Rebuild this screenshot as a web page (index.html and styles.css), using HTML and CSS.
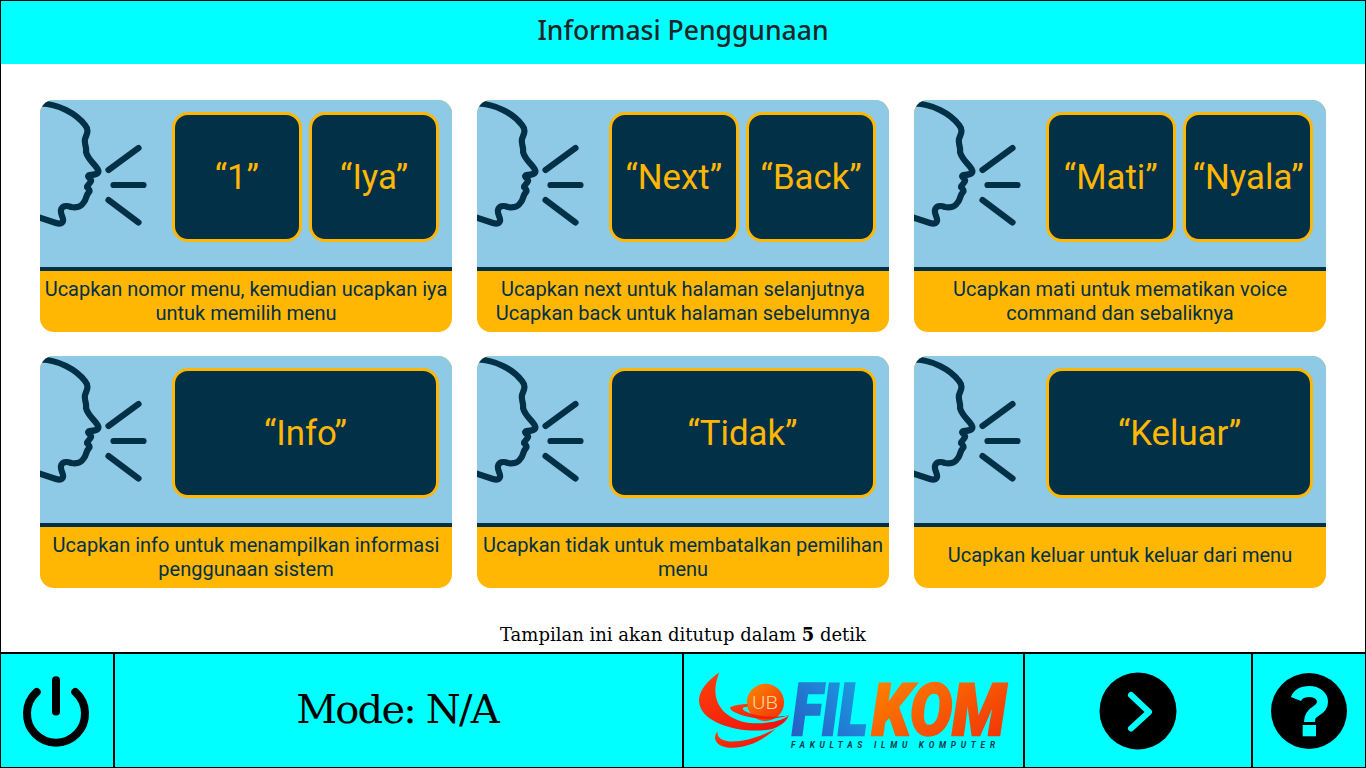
FILE: index.html
```html
<!DOCTYPE html>
<html lang="en">
<head>
  <meta charset="utf-8" />
  <title>Informasi Penggunaan</title>
  <link rel="stylesheet" href="styles.css">
</head>
<body>
  <svg class="defs" width="0" height="0">
    <defs>
      <symbol id="face" viewBox="0 0 110 130">
        <path class="face-line" d="M1 3.500C18 4 36 13 45 25C50 31 46 35 45 39C44 44 47 48 46 52C48 60 56 65 58 70C60 74 54 75 49 75C46 77 52 79 51 81C50 84 47 85 47 87C49 89 50 91 49 92C46 95 46 100 44 102C41 107 36 108 31 107C26 105 22 106 21 110C20 114 24 118 23 121C22 124 19 124 16 123L-2 117"/>
        <path class="face-line" d="M68.500 70L98.500 48M73.500 85H103.500M68.500 100L98.500 122.500"/>
      </symbol>
      <linearGradient id="logo-blue" x1="0" y1="1" x2="1" y2="0">
        <stop offset="0" stop-color="#2a55c0"/>
        <stop offset="0.6" stop-color="#1f86d8"/>
        <stop offset="1" stop-color="#12a8dc"/>
      </linearGradient>
      <linearGradient id="logo-orange" x1="0" y1="0" x2="1" y2="1">
        <stop offset="0" stop-color="#ff8a00"/>
        <stop offset="1" stop-color="#f02a08"/>
      </linearGradient>
      <linearGradient id="logo-red" x1="0" y1="0" x2="1" y2="1">
        <stop offset="0" stop-color="#ff4208"/>
        <stop offset="1" stop-color="#ee0e0e"/>
      </linearGradient>
    </defs>
  </svg>

  <header class="top-bar">Informasi Penggunaan</header>

  <main class="content">
    <section class="card-grid">
      <article class="card">
        <div class="card-top">
          <svg class="face"><use href="#face"/></svg>
          <div class="keys">
            <div class="key">“1”</div>
            <div class="key">“Iya”</div>
          </div>
        </div>
        <p class="card-desc">Ucapkan nomor menu, kemudian ucapkan iya untuk memilih menu</p>
      </article>
      <article class="card">
        <div class="card-top">
          <svg class="face"><use href="#face"/></svg>
          <div class="keys">
            <div class="key">“Next”</div>
            <div class="key">“Back”</div>
          </div>
        </div>
        <p class="card-desc"><span>Ucapkan next untuk halaman selanjutnya<br>Ucapkan back untuk halaman sebelumnya</span></p>
      </article>
      <article class="card">
        <div class="card-top">
          <svg class="face"><use href="#face"/></svg>
          <div class="keys">
            <div class="key">“Mati”</div>
            <div class="key">“Nyala”</div>
          </div>
        </div>
        <p class="card-desc">Ucapkan mati untuk mematikan voice command dan sebaliknya</p>
      </article>
      <article class="card">
        <div class="card-top">
          <svg class="face"><use href="#face"/></svg>
          <div class="keys">
            <div class="key key-wide">“Info”</div>
          </div>
        </div>
        <p class="card-desc">Ucapkan info untuk menampilkan informasi penggunaan sistem</p>
      </article>
      <article class="card">
        <div class="card-top">
          <svg class="face"><use href="#face"/></svg>
          <div class="keys">
            <div class="key key-wide">“Tidak”</div>
          </div>
        </div>
        <p class="card-desc">Ucapkan tidak untuk membatalkan pemilihan menu</p>
      </article>
      <article class="card">
        <div class="card-top">
          <svg class="face"><use href="#face"/></svg>
          <div class="keys">
            <div class="key key-wide">“Keluar”</div>
          </div>
        </div>
        <p class="card-desc card-desc-single">Ucapkan keluar untuk keluar dari menu</p>
      </article>
    </section>
    <p class="close-note">Tampilan ini akan ditutup dalam <strong>5</strong> detik</p>
  </main>

  <footer class="bottom-bar">
    <div class="cell">
      <svg class="power" width="72" height="76" viewBox="0 0 72 76">
        <path d="M15.700 19A29 29 0 1 0 54.300 19"/>
        <path d="M35 7.200V38.500"/>
      </svg>
    </div>
    <div class="cell mode">Mode: N/A</div>
    <div class="cell">
      <svg class="logo" width="340" height="113" viewBox="0 0 1020 339">
        <circle cx="245" cy="145" r="56" fill="url(#logo-orange)"/>
        <text class="logo-ub" x="205" y="166" textLength="78" lengthAdjust="spacingAndGlyphs">UB</text>
        <path fill="url(#logo-red)" d="M106 55C62 85 38 122 47 152C62 214 182 240 262 226C288 218 306 206 316 184C290 204 240 212 192 206C130 196 68 150 106 55Z"/>
        <path fill="url(#logo-red)" d="M138 160C155 152 175 150 192 150L192 158C176 158 172 164 182 170C210 186 260 194 316 184C270 200 210 196 170 182C152 176 140 170 138 160Z"/>
        <path fill="url(#logo-red)" d="M102 232C84 250 94 276 130 281C192 286 242 256 276 224C236 246 180 266 132 262C108 258 98 246 102 232Z"/>
        <text class="logo-name" transform="translate(326 243) scale(.77 1)" fill="url(#logo-blue)" stroke="url(#logo-blue)">FIL</text>
        <text class="logo-name" transform="translate(565 243) scale(.87 1)" fill="url(#logo-orange)" stroke="url(#logo-orange)">KOM</text>
        <text class="logo-sub" x="322" y="281" textLength="614">FAKULTAS ILMU KOMPUTER</text>
      </svg>
    </div>
    <div class="cell">
      <svg width="78" height="78" viewBox="0 0 78 78">
        <circle cx="39" cy="39" r="38.500"/>
        <path class="icon-stroke" d="M32 23L50 40L32 56.500"/>
      </svg>
    </div>
    <div class="cell">
      <svg width="78" height="78" viewBox="0 0 78 78">
        <circle cx="39" cy="39" r="38"/>
        <path class="icon-stroke icon-help" d="M26 27C28 22 33 19.500 39.500 19.500C47 19.500 52.500 24 52.500 30C52.500 34.500 49.500 37 46 39C41 42 39.500 44.500 39.500 50"/>
        <rect class="icon-fill" x="32.700" y="53" width="13.300" height="11.300"/>
      </svg>
    </div>
  </footer>
</body>
</html>
```

FILE: styles.css
```css
* { box-sizing: border-box; }
html, body { margin: 0; padding: 0; }
body {
  width: 1366px;
  height: 768px;
  display: flex;
  flex-direction: column;
  overflow: hidden;
  background: #fff;
  font-family: "Roboto", sans-serif;
}
.defs { position: absolute; }

.top-bar {
  height: 64px;
  display: flex;
  align-items: center;
  justify-content: center;
  padding-bottom: 6px;
  background: #0ff;
  border: 1px solid #000;
  border-bottom: 0;
  font-family: "Noto Sans", sans-serif;
  font-size: 26.500px;
  font-weight: 500;
  color: #212529;
}

.content {
  flex: 1;
  display: flex;
  flex-direction: column;
  padding: 36px 39px 0;
  border-left: 1px solid #000;
  border-right: 1px solid #000;
}
.card-grid {
  display: grid;
  grid-template-columns: repeat(3, 412px);
  grid-auto-rows: 232px;
  column-gap: 25px;
  row-gap: 24px;
}
.card {
  display: flex;
  flex-direction: column;
  border-radius: 14px;
  overflow: hidden;
  background: #ffb703;
}
.card-top {
  height: 171px;
  display: flex;
  justify-content: space-between;
  padding: 12px 13px 0 0;
  background: #8ecae6;
  border-bottom: 4px solid #023047;
}
.face {
  width: 110px;
  height: 130px;
  margin-top: -12px;
}
.face-line {
  fill: none;
  stroke: #023047;
  stroke-width: 6.200;
  stroke-linecap: round;
  stroke-linejoin: round;
}
.keys {
  width: 267px;
  height: 130px;
  display: grid;
  grid-template-columns: 129.600px 129.600px;
  column-gap: 7.800px;
}
.key {
  display: flex;
  align-items: center;
  justify-content: center;
  background: #023047;
  border: 3px solid #ffb703;
  border-radius: 16px;
  color: #ffb703;
  font-size: 34.800px;
}
.key-wide { grid-column: span 2; }
.card-desc {
  flex: 1;
  display: flex;
  align-items: center;
  justify-content: center;
  margin: 0;
  padding: 0 4px 2px;
  text-align: center;
  font-size: 20px;
  line-height: 24px;
  color: #023047;
}
.card-desc-single { padding-bottom: 6px; }

.close-note {
  margin: 36px 0 0;
  text-align: center;
  font-family: "DejaVu Serif", serif;
  font-size: 18px;
  line-height: 22px;
  color: #000;
}

.bottom-bar {
  height: 116px;
  display: grid;
  grid-template-columns: 112px 569px 341px 228px 1fr;
  background: #0ff;
  border: 1px solid #000;
  border-top: 2px solid #000;
}
.cell {
  display: flex;
  align-items: center;
  justify-content: center;
  border-left: 2px solid #000;
}
.cell:first-child { border-left: 0; }
.mode {
  padding: 0 3px 3px 0;
  font-family: "DejaVu Serif", serif;
  font-size: 40px;
  letter-spacing: -1.800px;
  color: #000;
}
.power {
  fill: none;
  stroke: #000;
  stroke-width: 8;
  stroke-linecap: round;
}
.icon-stroke {
  fill: none;
  stroke: #0ff;
  stroke-width: 6;
  stroke-linecap: round;
  stroke-linejoin: round;
}
.icon-help {
  stroke-width: 11;
  stroke-linecap: butt;
  stroke-linejoin: miter;
}
.icon-fill { fill: #0ff; }

.logo-ub {
  font-family: "Roboto", sans-serif;
  font-size: 56px;
  font-weight: 300;
  fill: #ffd9a0;
}
.logo-name {
  font-family: "Roboto", sans-serif;
  font-size: 218px;
  font-weight: 900;
  font-style: italic;
  stroke-width: 7;
}
.logo-sub {
  font-family: "Roboto", sans-serif;
  font-size: 25px;
  font-weight: 700;
  font-style: italic;
  fill: #123a4a;
}
```
